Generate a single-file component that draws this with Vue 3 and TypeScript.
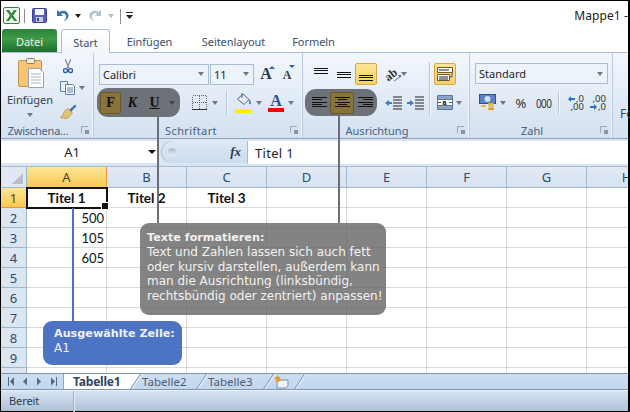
<script setup lang="ts">
const cols: string[] = ['A', 'B', 'C', 'D', 'E', 'F', 'G', 'H']
const rows: number[] = [1, 2, 3, 4, 5, 6, 7, 8, 9, 10]
const data: Record<string, string> = {
  A1: 'Titel 1', B1: 'Titel 2', C1: 'Titel 3', A2: '500', A3: '105', A4: '605',
}
function cellClass(c: string, r: number): string {
  return r === 1 ? 'cell head' : 'cell num'
}
</script>

<template>
  <div class="app">
    <header class="title">
      <svg class="xl" width="17" height="17" viewBox="0 0 17 17"><rect x=".5" y=".5" width="16" height="16" rx="1.5" fill="#f2f8ef" stroke="#2e8b3a"/><path d="M3 3h3l2.5 3.600L11 3h3l-4 5.500 4.200 5.600h-3L8.500 10.300 6 14.100H3l4-5.600z" fill="#2c8a3c"/></svg>
      <i class="qsep"></i>
      <svg class="save" width="15" height="15" viewBox="0 0 15 15"><rect x=".5" y=".5" width="14" height="14" rx="1" fill="#5a5fb8" stroke="#3c3f8c"/><rect x="3" y="1" width="9" height="6" fill="#f3f4fb"/><rect x="4" y="9" width="7" height="5" fill="#c9cbe6"/><rect x="5" y="10" width="2" height="3" fill="#3c3f8c"/></svg>
      <svg class="undo" width="13" height="13" viewBox="0 0 13 13"><path d="M1 1v6h6L5 5c2-1.500 4.500-.5 5 2 .4 2-.6 3.700-2.500 5 3.300-.6 5.200-3.200 5-5.700C12.200 2.300 7.500.2 3.500 3z" fill="#3a74b8"/></svg>
      <i class="arr dark undo-a"></i>
      <svg class="redo" width="13" height="13" viewBox="0 0 13 13"><path d="M12 1v6H6l2-2C6 3.500 3.500 4.500 3 7c-.4 2 .6 3.700 2.500 5-3.300-.6-5.200-3.200-5-5.700C.8 2.300 5.500.2 9.500 3z" fill="#b3c3d3"/></svg>
      <i class="arr light redo-a"></i>
      <i class="qsep second"></i>
      <svg class="custom" width="7" height="8" viewBox="0 0 7 8"><path d="M0 0h7v1H0zM0 3h7L3.500 7z" fill="#222"/></svg>
      <span class="doc">Mappe1 -</span>
    </header>

    <nav class="tabs">
      <span class="datei">Datei</span>
      <span class="tab start">Start</span>
      <span class="tab einf">Einfügen</span>
      <span class="tab seit">Seitenlayout</span>
      <span class="tab form">Formeln</span>
    </nav>

    <section class="ribbon">
      <div class="group g1">
        <div class="body clip">
          <div class="paste">
            <svg width="27" height="30" viewBox="0 0 27 30"><rect x=".5" y="2.500" width="23" height="26" rx="1.500" fill="#f7c376" stroke="#bf9552"/><rect x="8.500" y=".5" width="8" height="5" rx="1" fill="#efe9dc" stroke="#8d8062"/><path d="M10.500 10.500h11l4 4v15h-15z" fill="#fff" stroke="#9aa5b1"/><path d="M13 16h10M13 19h10M13 22h10M13 25h10" stroke="#a9b4c2"/></svg>
            <span class="ptext">Einfügen</span>
            <i class="arr grey"></i>
          </div>
          <div class="tools">
            <svg class="ic1" width="10" height="15" viewBox="0 0 11 16"><path d="M2.500 0l4 10M8.500 0l-4 10" stroke="#7d8794" stroke-width="1.300" fill="none"/><circle cx="2.700" cy="12.500" r="2.200" fill="none" stroke="#2f5da8" stroke-width="1.500"/><circle cx="8.300" cy="12.500" r="2.200" fill="none" stroke="#2f5da8" stroke-width="1.500"/></svg>
            <div class="tool2">
              <svg width="15" height="14" viewBox="0 0 15 14"><path d="M.5.500h7v10h-7z" fill="#e8f0fa" stroke="#5a82b5"/><path d="M5.500 3.500h7l2 2v8h-9z" fill="#fff" stroke="#5a82b5"/><path d="M7 7h6M7 9h6M7 11h6" stroke="#5a82b5"/></svg>
              <i class="arr grey"></i>
            </div>
            <svg class="ic3" width="17" height="15" viewBox="0 0 17 15"><path d="M9 6L15 .5l1.500 1.500L11 8z" fill="#4a6fa8"/><path d="M8 4.500l4.500 4.500-4 4.500C6 15 2 14.500 0 13c2 0 2.500-1 3-2.500C3.500 8 5.500 5.500 8 4.500z" fill="#e4c36f" stroke="#a5873f" stroke-width=".6"/></svg>
          </div>
        </div>
        <div class="label">Zwischena...<i class="launch"></i></div>
      </div>

      <div class="group g2">
        <div class="body">
          <div class="row r1">
            <div class="combo c-font"><span>Calibri</span><i class="arr grey"></i></div>
            <div class="combo c-size"><span>11</span><i class="arr grey"></i></div>
            <span class="grow big">A<i class="up"></i></span>
            <span class="grow small">A<i class="down"></i></span>
          </div>
          <div class="row r2">
            <div class="pill font-pill">
              <b class="fb active">F</b>
              <b class="fb ital">K</b>
              <b class="fb und">U</b>
              <i class="arr pillarr"></i>
            </div>
            <svg class="bord" width="15" height="15" viewBox="0 0 15 15" shape-rendering="crispEdges"><path d="M.5.500h14v14H.5zM7.500.500v14M.5 7.500h14" fill="none" stroke="#666" stroke-dasharray="1 1"/><path d="M0 14.500h15" stroke="#333"/></svg>
            <i class="arr grey a-bord"></i>
            <i class="vsep v1"></i>
            <div class="fill">
              <svg width="17" height="12" viewBox="0 0 17 12"><path d="M8 1l6 5.500-5 5L2.500 6z" fill="#e9eef5" stroke="#44648f"/><path d="M7 0v5" stroke="#44648f"/><path d="M14 6c1 1.500 2 3 2 4 0 1.500-2 1.500-2 0z" fill="#3f78c2"/></svg>
              <i class="yellow"></i>
            </div>
            <i class="arr grey a-fill"></i>
            <div class="color">
              <span>A</span>
              <i class="red"></i>
            </div>
            <i class="arr grey a-color"></i>
          </div>
        </div>
        <div class="label">Schriftart<i class="launch"></i></div>
      </div>

      <div class="group g3">
        <div class="body g3body">
          <div class="g3left">
            <div class="row r1">
              <span class="slot top"><i class="lines"></i></span>
              <span class="slot mid"><i class="lines"></i></span>
              <span class="orange"><i class="lines"></i></span>
              <svg class="orient" width="17" height="17" viewBox="0 0 17 17"><g transform="rotate(-38 7 9)"><text x="0" y="12" font-size="12" font-family="Liberation Serif, serif" font-weight="700" fill="#333">ab</text></g><path d="M9 15l7-5" stroke="#5b6e85"/><path d="M16.500 9l-3.500 0 2 3z" fill="#5b6e85"/></svg>
              <i class="arr grey a-orient"></i>
            </div>
            <div class="row r2a">
              <div class="pill align-pill">
                <span class="al left">
                  <svg width="15" height="12" viewBox="0 0 15 12"><path d="M0 .5h15M0 2.800h10M0 5.100h15M0 7.400h10M0 9.700h15" stroke="#111" shape-rendering="crispEdges"/></svg>
                </span>
                <span class="al active">
                  <svg width="15" height="12" viewBox="0 0 15 12"><path d="M0 .5h15M3 2.800h9M0 5.100h15M3 7.400h9M0 9.700h15" stroke="#111" shape-rendering="crispEdges"/></svg>
                </span>
                <span class="al right">
                  <svg width="15" height="12" viewBox="0 0 15 12"><path d="M0 .5h15M5 2.800h10M0 5.100h15M5 7.400h10M0 9.700h15" stroke="#111" shape-rendering="crispEdges"/></svg>
                </span>
              </div>
              <svg class="indent" width="17" height="16" viewBox="0 0 17 16"><path d="M8 2h9M8 5h9M8 8h9M8 11h9M8 14h9" stroke="#222"/><path d="M0 8l4-3v2h3v2H4v2z" fill="#3f78c2"/></svg>
              <svg class="indent i2" width="17" height="16" viewBox="0 0 17 16"><path d="M8 2h9M8 5h9M8 8h9M8 11h9M8 14h9" stroke="#222"/><path d="M7 8L3 5v2H0v2h3v2z" fill="#3f78c2"/></svg>
            </div>
          </div>
          <i class="vsep v2"></i>
          <div class="g3right">
            <span class="orange wrap">
              <svg width="16" height="16" viewBox="0 0 16 16"><path d="M.5 1.500h15v5H.5z" fill="#fff" stroke="#6b5a2c"/><path d="M2 4h10" stroke="#222"/><path d="M.5 8.500h12v6H.5z" fill="#fff" stroke="#6b5a2c"/><path d="M2 11h9M2 13h9" stroke="#222"/><path d="M15 6v5h-3" stroke="#375a8c" fill="none"/></svg>
            </span>
            <div class="merge">
              <svg width="16" height="15" viewBox="0 0 16 15"><path d="M.5.500h15v14H.5z" fill="#fff" stroke="#5c7696"/><path d="M.5 4.500h15M.5 10.500h15" stroke="#5c7696"/><rect x="1" y="1" width="14" height="3" fill="#8ca5c4"/><rect x="1" y="11" width="14" height="3" fill="#8ca5c4"/><text x="5.500" y="9.500" font-size="7" font-family="Liberation Sans, sans-serif" font-weight="700">a</text><path d="M1 7.500h3M12 7.500h3" stroke="#375a8c"/></svg>
              <i class="arr grey"></i>
            </div>
          </div>
        </div>
        <div class="label">Ausrichtung<i class="launch"></i></div>
      </div>

      <div class="group g4">
        <div class="body">
          <div class="combo c-num"><span>Standard</span><i class="arr grey"></i></div>
          <div class="row numrow">
            <svg width="17" height="17" viewBox="0 0 17 17"><rect x=".5" y=".5" width="16" height="9" fill="#5b82c4" stroke="#2f528c"/><ellipse cx="8.500" cy="5" rx="3" ry="3" fill="#cfe0f5"/><rect x="9" y="9" width="6" height="2" rx="1" fill="#e6b23c"/><rect x="9" y="11.500" width="6" height="2" rx="1" fill="#e6b23c"/><rect x="9" y="14" width="6" height="2" rx="1" fill="#d09a25"/><rect x="2" y="11" width="5" height="2" rx="1" fill="#e6b23c"/></svg>
            <i class="arr grey a-cur"></i>
            <span class="pct">%</span>
            <span class="k">000</span>
            <i class="vsep v3"></i>
            <span class="dec">
              <span class="d1"><svg width="7" height="6" viewBox="0 0 7 6"><path d="M0 3l3-3v2h4v2H3v2z" fill="#2f6fc0"/></svg>,0</span>
              <span class="d2">,00</span>
            </span>
            <span class="dec two">
              <span class="d1">,00</span>
              <span class="d2"><svg width="7" height="6" viewBox="0 0 7 6"><path d="M7 3L4 0v2H0v2h4v2z" fill="#2f6fc0"/></svg>,0</span>
            </span>
          </div>
        </div>
        <div class="label">Zahl<i class="launch"></i></div>
      </div>

      <div class="group g5"><span>Fo</span></div>
    </section>

    <section class="formula">
      <div class="name"><span>A1</span><i class="arr black"></i></div>
      <div class="fxwrap">
        <span class="knob"><i></i></span>
        <span class="fx">fx</span>
      </div>
      <div class="finput">Titel 1</div>
    </section>

    <section class="sheet">
      <div class="grid">
        <div class="corner"><i></i></div>
        <div v-for="c in cols" :key="c" class="ch" :class="{ sel: c === 'A' }">{{ c }}</div>
        <template v-for="r in rows" :key="r">
          <div class="rh" :class="{ sel: r === 1 }">{{ r }}</div>
          <div v-for="c in cols" :key="c + r" :class="cellClass(c, r)">{{ data[c + r] }}</div>
        </template>
      </div>
    </section>

    <section class="strip">
      <div class="nav">
        <svg width="62" height="9" viewBox="0 0 62 9"><path d="M7 0h1v9H7zM13 0v9L9 4.500zM26 .500v8l-4-4zM36 .500v8l4-4zM50 .500v8l4-4zM55 0h1v9h-1z" fill="#53697f"/></svg>
      </div>
      <div class="sheets">
        <svg class="shapes" width="245" height="15" viewBox="0 0 245 15">
          <path d="M0 0H76L66 15H0z" fill="#fff"/>
          <path d="M76.500 0L66.500 15M142.500 0l-10 15M209.500 0l-10 15M240.500 0l-10 15" stroke="#7d96b1" fill="none"/>
          <path d="M78 0L68 15M144 0l-10 15M211 0l-10 15M242 0l-10 15" stroke="#eef4fb" fill="none"/>
        </svg>
        <span class="st active">Tabelle1</span>
        <span class="st s2">Tabelle2</span>
        <span class="st s3">Tabelle3</span>
        <svg class="newt" width="16" height="14" viewBox="0 0 16 14"><path d="M4 5h11v6l-2 2H4z" fill="#eef3f9" stroke="#7f8fa3"/><path d="M4.500 0l1 2 2-.5-.6 2 1.600 1.500-2 .5-.5 2-1.500-1.500-2 .5.6-2L1 3l2-.5z" fill="#eb9a26"/></svg>
      </div>
    </section>

    <footer class="status"><span>Bereit</span></footer>

    <i class="link l-font"></i>
    <i class="link l-align"></i>
    <i class="link l-blue"></i>
    <aside class="note grey-note">
      <strong>Texte formatieren:</strong>
      Text und Zahlen lassen sich auch fett<br />
      oder kursiv darstellen, außerdem kann<br />
      man die Ausrichtung (linksbündig,<br />
      rechtsbündig oder zentriert) anpassen!
    </aside>
    <aside class="note blue-note">
      <strong>Ausgewählte Zelle:</strong>
      A1
    </aside>
  </div>
</template>

<style>
html, body { margin: 0; background: #000; }
</style>

<style scoped>
* { box-sizing: border-box; }
i { display: block; font-style: normal; }
.app {
  position: relative; width: 630px; height: 412px; overflow: hidden;
  padding: 1px 2px 1px 1px; background: #000;
  display: flex; flex-direction: column;
  font-family: "Noto Sans", "Open Sans", sans-serif; font-size: 11px; color: #3b4a60;
}
.arr { width: 0; height: 0; border-left: 3.5px solid transparent; border-right: 3.5px solid transparent; border-top: 4px solid #666; flex: none; }
.arr.dark { border-top-color: #222; }
.arr.light { border-top-color: #b5bcc5; }
.arr.grey { border-top-color: #6f7680; }
.arr.black { border-top-color: #111; border-left-width: 4px; border-right-width: 4px; }

.title { height: 28px; background: #fff; display: flex; align-items: center; flex: none; padding-left: 1px; }
.xl { margin-left: 1px; margin-top: 1px; }
.qsep { width: 1px; height: 14px; background: #8a8a8a; margin-left: 4px; margin-top: 2px; }
.save { margin-left: 7px; margin-top: 1px; }
.undo { margin-left: 9px; }
.undo-a { margin-left: 6px; margin-top: 1px; }
.redo { margin-left: 8px; }
.redo-a { margin-left: 6px; margin-top: 1px; }
.qsep.second { margin-left: 6px; height: 15px; }
.custom { margin-left: 5px; margin-top: 2px; }
.doc { margin-left: auto; color: #222; font-size: 12px; letter-spacing: .1px; margin-top: 1px; }

.tabs { height: 23px; background: #fff; display: flex; align-items: stretch; flex: none; position: relative; padding-left: 1px; }
.datei {
  width: 55px; background: linear-gradient(#29843b, #3f9a47 45%, #1c6e2e);
  border-radius: 3px 3px 0 0; display: flex; align-items: center; justify-content: center;
  padding-top: 1px; font-size: 11px; color: #e9f5e6;
}
.tab { display: flex; align-items: center; justify-content: center; font-size: 11px; color: #3d4f6a; padding-top: 1px; letter-spacing: -.05px; }
.start {
  margin-left: 4px; width: 49px; height: 24px; background: linear-gradient(#fff, #f1f6fc);
  border: 1px solid #aebdd0; border-bottom: 0; border-radius: 3px 3px 0 0; z-index: 1;
}
.einf { width: 79px; }
.seit { width: 89px; }
.form { width: 71px; }

.ribbon {
  height: 87px; flex: none; display: flex; border-top: 1px solid #a9bdd5; border-bottom: 1px solid #8fa1b7;
  background: linear-gradient(#f3f7fc, #dfe9f5 60%, #d4e1f0);
}
.group { display: flex; flex-direction: column; border-right: 1px solid #b9c9dc; box-shadow: inset -1px 0 0 #f2f6fb; flex: none; }
.body { height: 69px; }
.label { height: 16px; position: relative; display: flex; align-items: center; justify-content: center; color: #47607f; font-size: 11px; padding-right: 18px; }
.g1 .label { letter-spacing: -.2px; }
.g2 .label { padding-right: 14px; letter-spacing: .4px; }
.launch { position: absolute; right: 5px; top: 4px; width: 7px; height: 7px; border: 1px solid #9aa8b8; border-width: 1px 0 0 1px; }
.launch::after { content: ""; position: absolute; right: -1px; bottom: -1px; width: 4px; height: 4px; background: #87959f; }
.g1 { width: 93px; }
.g2 { width: 209px; }
.g3 { width: 167px; }
.g4 { width: 143px; }
.g5 { flex: 1; border: 0; box-shadow: none; color: #2f4a70; padding: 52px 0 0 7px; font-size: 12px; }

.clip { display: flex; padding-top: 5px; }
.paste { width: 58px; display: flex; flex-direction: column; align-items: center; }
.paste svg { margin-left: 3px; }
.ptext { margin-top: 5px; color: #333f50; font-size: 11px; line-height: 14px; }
.paste .arr { margin-top: 6px; }
.tools { display: flex; flex-direction: column; margin-left: 1px; }
.ic1 { margin: 1px 0 0 3px; }
.tool2 { display: flex; align-items: center; margin-top: 7px; gap: 4px; }
.ic3 { margin-top: 9px; }

.g2 .body { padding: 10px 0 0 5px; }
.row { display: flex; align-items: center; }
.r1 { height: 22px; }
.combo {
  height: 21px; border: 1px solid #abbdd2; background: #edf3fb; display: flex; align-items: center;
  justify-content: space-between; padding: 0 4px 0 3px; color: #1c2530; font-size: 11px; flex: none;
}
.c-font { width: 110px; }
.c-size { width: 44px; margin-left: 1px; }
.grow { font-family: "Liberation Serif", serif; font-weight: 700; color: #2d3a48; position: relative; width: 18px; text-align: center; line-height: 20px; }
.big { font-size: 16px; margin-left: 3px; }
.small { font-size: 12px; margin-left: 3px; padding-top: 2px; }
.up, .down { position: absolute; top: 2px; right: 0; width: 0; height: 0; border-left: 3px solid transparent; border-right: 3px solid transparent; }
.up { border-bottom: 3px solid #2f62a8; }
.down { border-top: 3px solid #2f62a8; right: 1px; }
.r2 { margin-top: 3px; height: 29px; }
.pill { background: #6d7278; border-radius: 11px; display: flex; align-items: center; flex: none; }
.font-pill { width: 83px; height: 29px; margin-left: -2px; padding-left: 3px; }
.fb { width: 21px; height: 22px; font-family: "Liberation Serif", serif; color: #111; font-size: 14px; display: flex; align-items: center; justify-content: center; border-radius: 2px; margin-right: 1px; }
.fb.active { background: #8a7339; border: 1px solid #6a5626; }
.fb.ital { font-style: italic; }
.fb.und { text-decoration: underline; }
.pillarr { border-top-color: #3d4249; margin-left: 3px; }
.bord { margin-left: 12px; }
.a-bord { margin-left: 5px; }
.v1 { margin-left: 8px; }
.vsep { width: 1px; height: 24px; background: #b7c6d8; box-shadow: 1px 0 0 #f5f8fc; flex: none; }
.fill { margin-left: 8px; width: 17px; }
.yellow { height: 4px; background: #ffee00; margin-top: 1px; }
.a-fill { margin-left: 4px; }
.color { margin-left: 6px; width: 16px; text-align: center; }
.color span { display: block; font-family: "Liberation Serif", serif; font-weight: 700; color: #2d4f8e; font-size: 16px; line-height: 13px; }
.red { height: 4px; background: #f00; margin-top: 1px; }
.a-color { margin-left: 4px; }

.g3body { display: flex; padding: 10px 0 0 2px; }
.g3left { width: 124px; }
.slot { width: 23px; height: 22px; display: flex; justify-content: center; }
.lines { width: 14px; height: 6px; border-top: 1px solid #111; border-bottom: 1px solid #111; position: relative; }
.lines::after { content: ""; position: absolute; left: 0; right: 0; top: 1px; height: 2px; border-top: 1px solid #111; }
.slot:first-child { margin-left: 4px; }
.top { padding-top: 5px; }
.mid { padding-top: 9px; }
.orange {
  width: 22px; height: 22px; background: linear-gradient(#fde59a, #fbcf66); border: 1px solid #d7a944; border-radius: 2px;
  display: flex; align-items: flex-end; justify-content: center; padding-bottom: 3px; flex: none;
}
.orient { margin-left: 8px; }
.a-orient { margin-left: -1px; }
.r2a { margin-top: 4px; }
.align-pill { width: 72px; height: 27px; padding: 0 3px; border-radius: 11px; }
.al { width: 22px; height: 22px; display: flex; align-items: center; justify-content: center; flex: none; }
.al.active { width: 24px; background: #8a7339; border: 1px solid #6a5626; border-radius: 2px; }
.indent { margin-left: 8px; }
.i2 { margin-left: 5px; }
.v2 { height: 54px; margin-top: -1px; }
.g3right { margin-left: 4px; }
.wrap { align-items: center; padding: 0; }
.merge { display: flex; align-items: center; gap: 3px; margin-top: 10px; padding-left: 3px; }

.g4 .body { padding: 10px 0 0 5px; }
.c-num { width: 133px; }
.numrow { margin: 9px 0 0 4px; height: 19px; }
.a-cur { margin-left: 4px; }
.pct { margin-left: 8px; font-size: 13px; color: #333; width: 14px; text-align: center; }
.k { margin-left: 8px; color: #333; font-size: 10px; width: 14px; letter-spacing: -.6px; transform: scaleY(1.200); }
.v3 { margin-left: 8px; height: 22px; }
.dec { margin-left: 8px; width: 17px; display: flex; flex-direction: column; font-size: 9.500px; line-height: 8px; color: #333; font-weight: 400; }
.dec.two { margin-left: 5px; }
.d1, .d2 { display: flex; justify-content: flex-end; align-items: center; height: 8px; gap: 1px; }

.formula { height: 28px; flex: none; display: flex; padding: 2px 0 3px; background: #d9e5f3; border-bottom: 1px solid #a9bbd0; }
.name { width: 157px; height: 22px; background: #fff; display: flex; align-items: center; position: relative; font-size: 13px; color: #222; justify-content: center; padding-right: 15px; }
.name .arr { position: absolute; right: 2px; top: 9px; }
.fxwrap {
  width: 86px; height: 22px; margin-left: 3px; background: linear-gradient(#dde8f5, #cddcee); display: flex; align-items: center;
  justify-content: flex-end; padding-right: 6px; border-radius: 11px 0 0 11px; position: relative; box-shadow: inset 1px 0 0 #aabbcf;
}
.knob { position: absolute; left: 3px; top: 3px; width: 16px; height: 16px; border-radius: 50%; display: flex; align-items: center; justify-content: center; }
.knob i { width: 8px; height: 8px; border-radius: 50%; background: linear-gradient(#aeb9c7, #e8eef6); }
.fx { font-family: "Liberation Serif", serif; font-style: italic; font-weight: 700; font-size: 13px; color: #2a3a4e; }
.finput { flex: 1; height: 23px; background: #fff; border-left: 1px solid #a9bbd0; display: flex; align-items: center; padding: 0 0 0 7px; color: #1c2530; font-size: 13px; letter-spacing: .3px; }

.sheet { flex: 1; background: #fff; overflow: hidden; min-height: 0; }
.grid { display: grid; grid-template-columns: 26px repeat(8, 80px); grid-template-rows: 21px repeat(10, 20px); width: 666px; }
.corner { background: #dfe8f3; border-right: 1px solid #9eb6ce; border-bottom: 1px solid #9eb6ce; display: flex; align-items: flex-end; justify-content: flex-end; padding: 0 3px 3px 0; }
.corner i { width: 0; height: 0; border-left: 11px solid transparent; border-bottom: 11px solid #b4bfcb; }
.ch { background: linear-gradient(#e1eaf5, #d7e3f1); border-right: 1px solid #9eb6ce; border-bottom: 1px solid #9eb6ce; display: flex; align-items: center; justify-content: center; font-size: 13px; color: #2e4a6c; }
.ch.sel { background: linear-gradient(#fee696, #f9c852); border-right-color: #f29536; border-bottom-color: #f29536; color: #4c4220; }
.rh { background: #dce6f1; border-right: 1px solid #9eb6ce; border-bottom: 1px solid #9eb6ce; display: flex; align-items: center; justify-content: center; font-size: 13px; color: #2e4a6c; }
.rh.sel { background: linear-gradient(#fee696, #f9c852); border-right-color: #f29536; border-bottom-color: #f29536; color: #4c4220; }
.cell { border-right: 1px solid #d9d9d9; border-bottom: 1px solid #d9d9d9; font-family: "Lato", "Carlito", sans-serif; color: #111; display: flex; align-items: center; font-size: 13px; }
.cell.head { justify-content: center; font-weight: 700; font-size: 13.500px; }
.cell.num { justify-content: flex-end; padding-right: 2px; }
.grid .rh.sel + .cell { outline: 2px solid #111; outline-offset: -1px; position: relative; }
.grid .rh.sel + .cell::after { content: ""; position: absolute; right: -3px; bottom: -3px; width: 6px; height: 6px; background: #111; border: 1px solid #fff; }

.strip { height: 17px; flex: none; background: linear-gradient(#cddef1, #c3d6ed); border-top: 1px solid #7d96b1; border-bottom: 1px solid #7d96b1; display: flex; }
.nav { width: 63px; height: 15px; border-right: 1px solid #8fa5bd; display: flex; align-items: center; }
.sheets { display: flex; align-items: center; height: 15px; flex: 1; position: relative; }
.shapes { position: absolute; left: 0; top: 0; }
.st { font-size: 11.500px; color: #4a5e78; flex: none; position: relative; }
.st.active { font-weight: 700; margin-left: 9px; width: 69px; color: #2e4464; font-size: 12px; letter-spacing: -.2px; }
.s2 { width: 66px; }
.s3 { width: 65px; }
.newt { position: relative; }

.status { height: 21px; flex: none; background: linear-gradient(#d7e3f2, #afc1d7); border-top: 1px solid #eaf1f9; display: flex; align-items: center; padding-left: 8px; color: #2b3d55; font-size: 11px; letter-spacing: -.1px; }
.status span { width: 65px; height: 21px; line-height: 20px; border-right: 1px solid #9cafc6; box-shadow: 1px 0 0 #e2eaf4; }

.link { position: absolute; width: 2px; }
.l-font { left: 157px; top: 117px; height: 106px; background: #6b6f74; }
.l-align { left: 338px; top: 116px; height: 107px; background: #6b6f74; }
.l-blue { left: 72px; top: 208px; height: 114px; background: #4a72c4; }
.note {
  position: absolute; color: #f2f2f2; font-family: "DejaVu Sans", sans-serif; font-size: 12px; line-height: 14.400px; border-radius: 9px; white-space: nowrap;
}
.note strong { display: block; font-size: 11.200px; }
.grey-note { left: 140px; top: 223px; width: 246px; height: 92px; padding: 8px 7px; background: rgba(96, 96, 96, .78); }
.blue-note { left: 43px; top: 321px; width: 139px; height: 44px; padding: 6px 11px; background: rgba(62, 103, 192, .92); color: #eef2fb; }
</style>
